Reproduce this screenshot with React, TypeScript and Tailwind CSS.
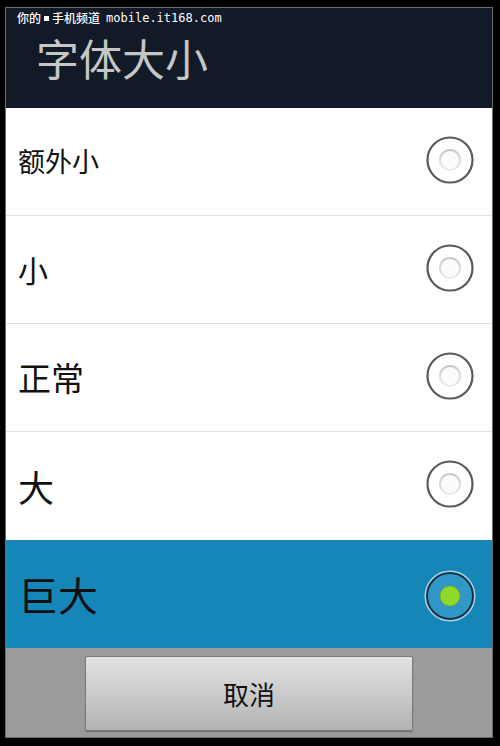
import React from 'react';

const cjk = { fontFamily: '"Noto Sans CJK SC", "Noto Sans", sans-serif' };

type Option = { label: string; size: string; selected?: boolean };

const options: Option[] = [
  { label: '额外小', size: 'text-[27px]' },
  { label: '小', size: 'text-[30px]' },
  { label: '正常', size: 'text-[33px]' },
  { label: '大', size: 'text-[36px]' },
  { label: '巨大', size: 'text-[40px]', selected: true },
];

function Radio({ checked }: { checked?: boolean }) {
  if (checked) {
    return (
      <svg width="52" height="52" viewBox="0 0 52 52">
        <circle cx="26" cy="26" r="24.5" fill="none" stroke="#cfe8f5" strokeWidth="2" opacity="0.8" />
        <circle cx="26" cy="26" r="23" fill="#3197c6" stroke="#173547" strokeWidth="2" />
        <circle cx="26" cy="26" r="10" fill="#92d82a" stroke="#74b01e" strokeWidth="0.8" />
      </svg>
    );
  }
  return (
    <svg width="52" height="52" viewBox="0 0 52 52">
      <defs>
        <linearGradient id="inner" x1="0" y1="0" x2="0" y2="1">
          <stop offset="0" stopColor="#c8c8c8" />
          <stop offset="1" stopColor="#ececec" />
        </linearGradient>
      </defs>
      <circle cx="26" cy="26" r="22.5" fill="#fff" stroke="#5a5a5a" strokeWidth="2.2" />
      <circle cx="26" cy="26" r="10" fill="#fbfbfb" stroke="url(#inner)" strokeWidth="2" />
    </svg>
  );
}

export default function App() {
  return (
    <div className="w-[500px] h-[746px] bg-black overflow-hidden pt-[7px] pl-[5px]" style={cjk}>
      <div className="w-[488px] border border-[#6e6e6e] flex flex-col">
        <div className="h-[100px] bg-[#121a27] relative">
          <div className="absolute left-[11px] top-[2px] text-white text-[12px] font-medium leading-[16px] flex items-center gap-[3px]">
            <span>你的</span>
            <span className="w-[5px] h-[5px] bg-white inline-block" />
            <span>手机频道</span>
            <span className="ml-[3px]" style={{ fontFamily: '"DejaVu Sans Mono", monospace' }}>mobile.it168.com</span>
          </div>
          <div className="pl-[30px] pt-[25px] text-[43px] leading-[48px] text-[#c6c6c6]">字体大小</div>
        </div>
        {options.map((o, i) => (
          <div
            key={o.label}
            className={`h-[108px] flex items-center justify-between pl-[12px] pr-[16px] ${
              o.selected ? 'bg-[#1685b8]' : 'bg-white'
            } ${i < options.length - 2 ? 'border-b border-[#e2e2e2]' : ''}`}
          >
            <span className={`${o.size} text-[#111]`}>{o.label}</span>
            <div className={o.selected ? 'mt-[4px]' : '-mt-[4px]'}>
              <Radio checked={o.selected} />
            </div>
          </div>
        ))}
        <div className="h-[89px] bg-[#9b9b9b] flex justify-center pt-[8px]">
          <button className="w-[328px] h-[75px] rounded-[2px] border border-[#7a7a7a] bg-gradient-to-b from-[#e3e3e3] to-[#b3b3b3] text-[26px] text-[#111] shadow-[0_1px_1px_rgba(0,0,0,0.3)]">
            取消
          </button>
        </div>
      </div>
    </div>
  );
}
